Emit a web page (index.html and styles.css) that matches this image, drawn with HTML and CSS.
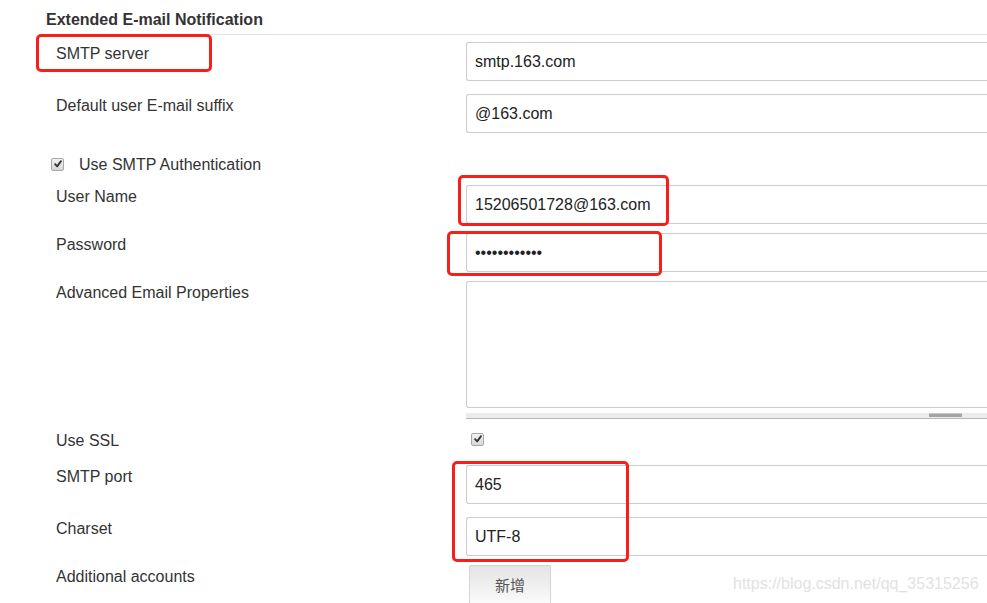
FILE: index.html
```html
<!DOCTYPE html>
<html lang="en">
<head>
  <meta charset="UTF-8">
  <meta name="viewport" content="width=device-width, initial-scale=1.0">
  <title>Extended E-mail Notification</title>
  <link rel="stylesheet" href="styles.css">
</head>
<body>
  <div class="page">
    <h3 class="section-title">Extended E-mail Notification</h3>

    <div class="form">
      <div class="row">
        <label class="label">SMTP server</label>
        <div class="field"><input class="text" type="text" value="smtp.163.com"></div>
      </div>

      <div class="row">
        <label class="label">Default user E-mail suffix</label>
        <div class="field"><input class="text" type="text" value="@163.com"></div>
      </div>

      <div class="row row-check">
        <span class="checkbox"><svg viewBox="0 0 12 12" width="12" height="12"><path d="M2.5 6.2 L5 8.8 L9.6 2.6" fill="none" stroke="#333" stroke-width="2.2" stroke-linecap="round" stroke-linejoin="round"/></svg></span>
        <span class="check-label">Use SMTP Authentication</span>
      </div>

      <div class="row row-after-check">
        <label class="label">User Name</label>
        <div class="field"><input class="text" type="text" value="15206501728@163.com"></div>
      </div>

      <div class="row row-tight">
        <label class="label">Password</label>
        <div class="field"><input class="text" type="password" value="passwordxxxx"></div>
      </div>

      <div class="row row-tight">
        <label class="label">Advanced Email Properties</label>
        <div class="field">
          <textarea class="area"></textarea>
          <div class="hscroll"><div class="hscroll-thumb"></div></div>
        </div>
      </div>

      <div class="row row-ssl">
        <label class="label">Use SSL</label>
        <div class="field field-check">
          <span class="checkbox"><svg viewBox="0 0 12 12" width="12" height="12"><path d="M2.5 6.2 L5 8.8 L9.6 2.6" fill="none" stroke="#333" stroke-width="2.2" stroke-linecap="round" stroke-linejoin="round"/></svg></span>
        </div>
      </div>

      <div class="row row-port">
        <label class="label">SMTP port</label>
        <div class="field"><input class="text" type="text" value="465"></div>
      </div>

      <div class="row">
        <label class="label">Charset</label>
        <div class="field"><input class="text" type="text" value="UTF-8"></div>
      </div>

      <div class="row row-tight">
        <label class="label">Additional accounts</label>
        <div class="field"><button class="btn" type="button">新增</button></div>
      </div>
    </div>

    <!-- red annotation boxes drawn over the form -->
    <div class="mark mark-server"></div>
    <div class="mark mark-user"></div>
    <div class="mark mark-pass"></div>
    <div class="mark mark-port"></div>

    <div class="watermark">https://blog.csdn.net/qq_35315256</div>
  </div>
</body>
</html>
```

FILE: styles.css
```css
html, body {
  margin: 0;
  height: 100%;
  overflow: hidden;
  background: #fff;
}
body {
  font-family: "Liberation Sans", Arial, sans-serif;
  font-size: 16px;
  color: #333;
}
.page {
  position: relative;
  box-sizing: border-box;
  height: 603px;
  padding-top: 10px;
}
.section-title {
  margin: 0 0 0 46px;
  padding-bottom: 4px;
  font-size: 16px;
  line-height: 20px;
  font-weight: bold;
  color: #333;
  border-bottom: 1px solid #e2e2e2;
}
.form {
  display: flex;
  flex-direction: column;
  padding-top: 7px;
}
.row {
  display: grid;
  grid-template-columns: 410px 521px;
  padding-left: 56px;
  margin-bottom: 13px;
}
.row-tight {
  margin-top: -4px;
}
.label {
  padding-top: 3px;
  line-height: 18px;
}
.text {
  box-sizing: border-box;
  width: 521px;
  height: 39px;
  padding: 0 8px;
  border: 1px solid #ccc;
  border-right: none;
  border-radius: 3px 0 0 3px;
  font-family: "Liberation Sans", Arial, sans-serif;
  font-size: 16px;
  color: #222;
  background: #fff;
  outline: none;
}
.row-check {
  display: flex;
  align-items: center;
  padding-left: 51px;
  margin-top: 9px;
  margin-bottom: 0;
  height: 18px;
}
.check-label {
  margin-left: 15px;
  line-height: 18px;
  padding-top: 1px;
}
.row-after-check {
  margin-top: 12px;
}
.checkbox {
  box-sizing: border-box;
  display: inline-flex;
  align-items: center;
  justify-content: center;
  width: 13px;
  height: 13px;
  border: 1px solid #a8a8a8;
  border-radius: 2px;
  background: linear-gradient(#f2f2f2, #d6d6d6);
}
.checkbox svg {
  width: 10px;
  height: 10px;
}
.area {
  display: block;
  box-sizing: border-box;
  width: 521px;
  height: 127px;
  border: 1px solid #ccc;
  border-right: none;
  border-radius: 3px 0 0 3px;
  resize: none;
  outline: none;
  background: #fff;
}
.hscroll {
  box-sizing: border-box;
  width: 521px;
  height: 6px;
  margin-top: 5px;
  background: #ececec;
  border-bottom: 1px solid #b8b8b8;
}
.hscroll-thumb {
  width: 33px;
  height: 4px;
  margin-left: 463px;
  margin-top: 1px;
  background: #a4a4a4;
  border-top: 1px solid #c8c8c8;
  box-sizing: border-box;
}
.row-ssl {
  margin-top: -3px;
  margin-bottom: 0;
}
.field-check {
  padding-top: 1px;
  padding-left: 5px;
}
.row-port {
  margin-top: 15px;
}
.btn {
  margin-left: 3px;
  width: 82px;
  height: 40px;
  border: 1px solid #d4d4d4;
  border-bottom: none;
  border-radius: 2px 2px 0 0;
  background: linear-gradient(#e4e4e4, #fbfbfb);
  font-family: "Noto Sans CJK SC", sans-serif;
  font-size: 15px;
  color: #555;
  padding: 0 0 2px;
}
.mark {
  position: absolute;
  box-sizing: border-box;
  border: 3px solid #f5201a;
  border-radius: 5px;
}
.mark-server {
  left: 36px;
  top: 34px;
  width: 176px;
  height: 38px;
}
.mark-user {
  left: 458px;
  top: 175px;
  width: 211px;
  height: 51px;
}
.mark-pass {
  left: 447px;
  top: 231px;
  width: 215px;
  height: 45px;
}
.mark-port {
  left: 452px;
  top: 461px;
  width: 177px;
  height: 101px;
}
.watermark {
  position: absolute;
  left: 733px;
  top: 575px;
  font-size: 16px;
  line-height: 18px;
  color: #e2e2e2;
}
```
